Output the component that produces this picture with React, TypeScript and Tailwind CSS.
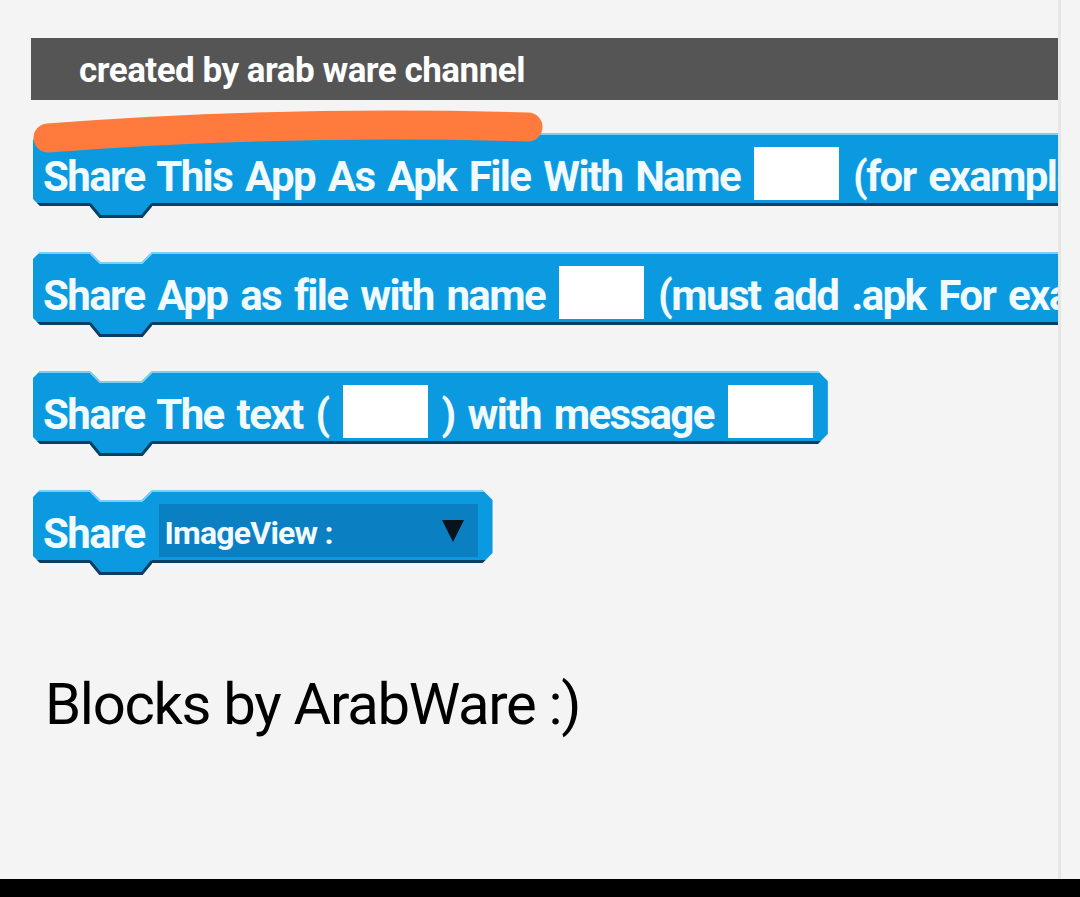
import React from "react";

const chamfer =
  "[clip-path:polygon(7px_0,calc(100%-10px)_0,100%_10px,100%_calc(100%-10px),calc(100%-10px)_100%,7px_100%,0_calc(100%-7px),0_7px)]";

function Notches() {
  return (
    <>
      <svg
        className="absolute left-[57px] top-0 z-10"
        width="62"
        height="13"
        viewBox="0 0 62 13"
      >
        <polygon points="0,0 10,10 52,10 62,0" fill="#f4f4f4" />
        <polyline
          points="0,1 10,11 52,11 62,1"
          fill="none"
          stroke="#7ccff4"
          strokeWidth="2"
        />
      </svg>
      <svg
        className="absolute left-[57px] top-[calc(100%-3px)] z-10"
        width="62"
        height="16"
        viewBox="0 0 62 16"
      >
        <polygon points="0,0 62,0 52,13 10,13" fill="#0b9ae0" />
        <polyline
          points="0,1.5 10,13.5 52,13.5 62,1.5"
          fill="none"
          stroke="#0a3f63"
          strokeWidth="3"
        />
      </svg>
    </>
  );
}

function Block({ children }: { children: React.ReactNode }) {
  return (
    <div className="relative ml-[2px] w-max self-start">
      <div
        className={`flex h-[73px] items-center gap-[14px] whitespace-nowrap border-t-2 border-b-[3px] border-t-[#7ccff4] border-b-[#0a3f63] bg-[#0b9ae0] pl-[10px] pr-[15px] pt-[12px] pb-[3px] ${chamfer}`}
      >
        {children}
      </div>
      <Notches />
    </div>
  );
}

function Label({ children }: { children: React.ReactNode }) {
  return (
    <span className="pt-[6px] text-[42px] font-bold leading-none tracking-[-1.6px] text-[#f0faff] [word-spacing:4px]">
      {children}
    </span>
  );
}

function Input() {
  return <div className="h-[53px] w-[85px] shrink-0 bg-white" />;
}

export default function App() {
  return (
    <div className="flex h-[897px] w-[1080px] flex-col overflow-hidden bg-[#f4f4f4] [font-family:Roboto,'Liberation_Sans',sans-serif]">
      <div className="flex flex-1">
        <div className="flex w-[1058px] flex-col overflow-hidden pl-[31px] pt-[38px]">
          <div className="flex h-[62px] items-center bg-[#555555] pl-[48px]">
            <span className="pt-[5px] text-[35px] font-bold tracking-[-0.5px] text-white">
              created by arab ware channel
            </span>
          </div>
          <div className="relative flex flex-col gap-[46px] pt-[33px] pb-[14px]">
            <Block>
              <Label>Share This App As Apk File With Name</Label>
              <Input />
              <Label>(for example : ArabWare.apk)</Label>
            </Block>
            <Block>
              <Label>Share App as file with name</Label>
              <Input />
              <Label>(must add .apk For example : App.apk)</Label>
            </Block>
            <Block>
              <Label>Share The text (</Label>
              <Input />
              <Label>) with message</Label>
              <Input />
            </Block>
            <Block>
              <Label>Share</Label>
              <div className="flex h-[53px] w-[319px] items-center justify-between bg-[#0a7fc2] pl-[6px] pr-[14px]">
                <span className="pt-[4px] text-[32px] font-bold tracking-[-0.8px] text-[#f0faff]">
                  ImageView :
                </span>
                <svg width="22" height="22" viewBox="0 0 22 22">
                  <polygon points="0,0 22,0 11,22" fill="#08131d" />
                </svg>
              </div>
            </Block>
            <svg
              className="pointer-events-none absolute left-0 top-0 z-20"
              width="540"
              height="60"
              viewBox="0 0 540 60"
            >
              <path
                d="M 17 38 Q 250 20 497 27"
                fill="none"
                stroke="#ff7a3c"
                strokeWidth="29"
                strokeLinecap="round"
              />
            </svg>
          </div>
          <div className="pl-[14px] pt-[98px]">
            <span className="text-[58px] leading-none tracking-[-1.3px] text-black">
              Blocks by ArabWare :)
            </span>
          </div>
        </div>
        <div className="w-[3px] bg-[#e6e6e6]" />
        <div className="flex-1" />
      </div>
      <div className="h-[18px] bg-black" />
    </div>
  );
}
